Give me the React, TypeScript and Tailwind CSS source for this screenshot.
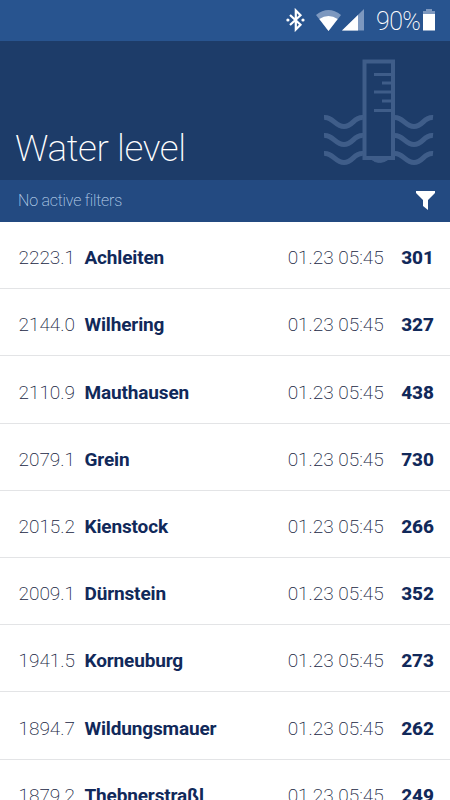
type Station = {
  km: string;
  name: string;
  time: string;
  level: number;
};

const stations: Station[] = [
  { km: "2223.1", name: "Achleiten", time: "01.23 05:45", level: 301 },
  { km: "2144.0", name: "Wilhering", time: "01.23 05:45", level: 327 },
  { km: "2110.9", name: "Mauthausen", time: "01.23 05:45", level: 438 },
  { km: "2079.1", name: "Grein", time: "01.23 05:45", level: 730 },
  { km: "2015.2", name: "Kienstock", time: "01.23 05:45", level: 266 },
  { km: "2009.1", name: "Dürnstein", time: "01.23 05:45", level: 352 },
  { km: "1941.5", name: "Korneuburg", time: "01.23 05:45", level: 273 },
  { km: "1894.7", name: "Wildungsmauer", time: "01.23 05:45", level: 262 },
  { km: "1879.2", name: "Thebnerstraßl", time: "01.23 05:45", level: 249 },
];

const StatusBar = () => (
  <div className="flex h-[41px] shrink-0 items-center justify-end bg-[#28548f] pr-[15px] text-white">
    <svg className="-mt-0.5 mr-[10px]" width="20" height="24" viewBox="0 0 20 24" fill="none">
      <path d="M4 7 14.5 16.8 9.8 21.5V2.5L14.5 7.2 4 17" stroke="white" strokeWidth="2.2" />
      <circle cx="1.9" cy="12" r="1.6" fill="white" />
      <circle cx="17" cy="12" r="1.6" fill="white" />
    </svg>
    <svg className="mr-px" width="25" height="22" viewBox="0 0 25 22">
      <path d="M0 5Q12.5 -5 25 5L12.5 21Z" fill="#7d98bf" />
      <path d="M3.3 9Q12.5 2.8 21.7 9L12.5 21Z" fill="white" />
    </svg>
    <svg className="-mt-0.5 mr-3" width="22" height="22" viewBox="0 0 22 22">
      <path d="M0 21.5 22 0V21.5Z" fill="#7d98bf" />
      <path d="M0 21.5 16 6V21.5Z" fill="white" />
    </svg>
    <span className="mt-0.5 mr-[3px] w-[44px] text-[25px] leading-none font-extralight tracking-[-0.6px] whitespace-nowrap">90%</span>
    <svg className="-mt-0.5" width="12" height="22" viewBox="0 0 12 22">
      <path d="M3 0h6v2h3v3H0V2h3Z" fill="#7d98bf" />
      <path d="M0 5h12v16.5H0Z" fill="white" />
    </svg>
  </div>
);

const GaugeIcon = () => (
  <svg width="110" height="108" viewBox="0 0 110 108" fill="none" stroke="#3f5d89">
    <path d="M40.5 2.5H69V99H40.5Z" strokeWidth="4" />
    <path d="M50 15.5H67M58 24H67M50 33H67M58 42H67M50 51.5H67" strokeWidth="3" />
    <path d="M47 100Q55 107 65 100Z" fill="#3f5d89" strokeWidth="1" />
    {[57.5, 75.5, 93.5].map((y) => (
      <g key={y} transform={`translate(0 ${y})`} strokeWidth="5">
        <path d="M0 1C9 0 11 10 20 10S30 0 39 1" />
        <path d="M70 1C79 0 81 10 90 10S100 0 109 1" />
      </g>
    ))}
  </svg>
);

const StationRow = ({ km, name, time, level }: Station) => (
  <li className="flex h-[67.2px] shrink-0 items-center border-b border-[#e3e4e6] pt-[6.8px] pr-4 pl-[18.5px] text-[19px] text-[#11295a]">
    <span className="w-[66px] font-extralight text-[#172542]">{km}</span>
    <span className="flex-1 font-bold tracking-[-0.15px]">{name}</span>
    <span className="w-[113.5px] font-extralight whitespace-nowrap text-[#172542]">{time}</span>
    <span className="font-extrabold">{level}</span>
  </li>
);

const App = () => {
  return (
    <div className="flex h-screen w-full flex-col overflow-hidden bg-white font-['Roboto',sans-serif]">
      <StatusBar />

      <header className="flex h-[139px] shrink-0 items-end justify-between bg-[#1d3c69] pr-4 pl-[15px]">
        <h1 className="mb-[8px] text-[37px] leading-[46px] font-extralight tracking-[-0.4px] text-white">Water level</h1>
        <div className="mb-[13px]">
          <GaugeIcon />
        </div>
      </header>

      <div className="flex h-[42px] shrink-0 items-center justify-between bg-[#234a81] pr-[15px] pl-[18px]">
        <span className="text-base font-extralight tracking-[-0.2px] text-[#b9d2ec]">No active filters</span>
        <svg className="-mt-0.5" width="19" height="20" viewBox="0 0 19 20" fill="white">
          <path d="M0 1H19V3L12 10V20L7 16V10L0 3Z" />
        </svg>
      </div>

      <ul className="flex flex-col">
        {stations.map((station) => (
          <StationRow key={station.km} {...station} />
        ))}
      </ul>
    </div>
  );
};

export default App;
